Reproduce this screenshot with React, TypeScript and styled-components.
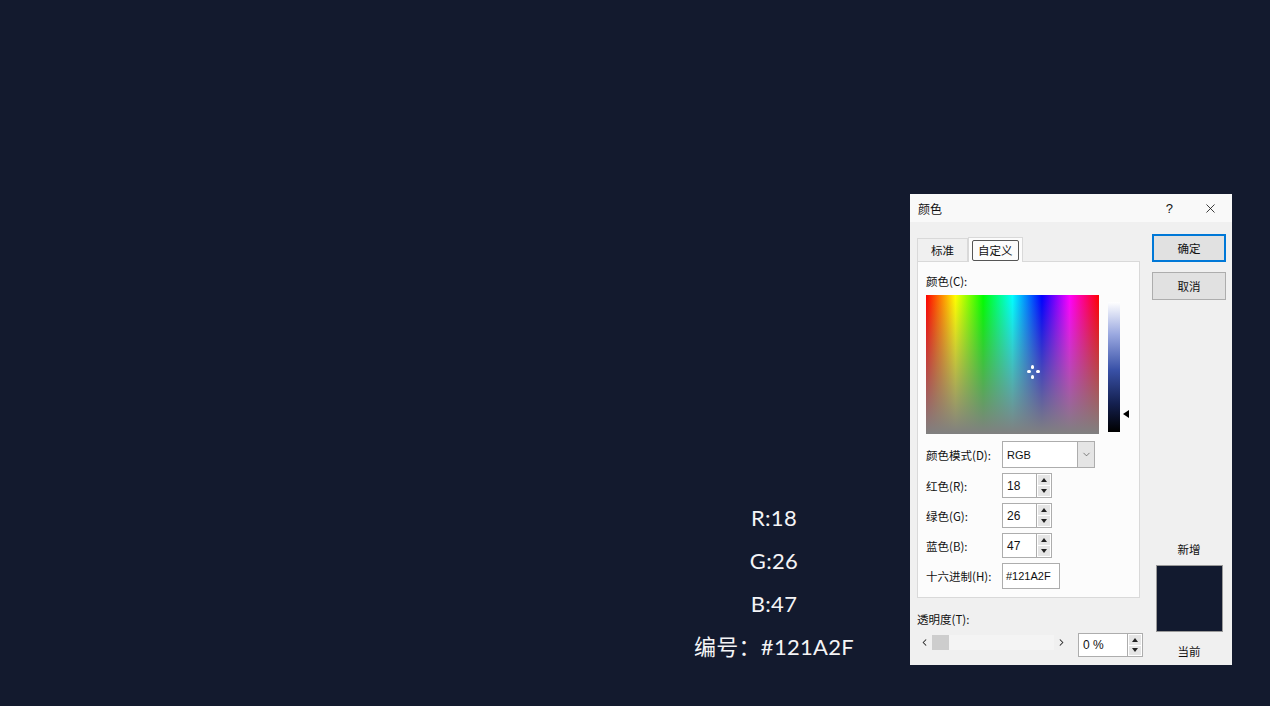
import styled, { createGlobalStyle } from "styled-components";
import { ChevronDown, ChevronLeft, ChevronRight, X } from "lucide-react";

const GlobalStyle = createGlobalStyle`
  html, body {
    margin: 0;
    padding: 0;
    background: #131a2e;
  }
`;

const CJK = `"Noto Sans CJK SC", "Noto Sans", sans-serif`;

export default function App() {
  return (
    <>
      <GlobalStyle />
      <Page>
        <Values>
          <ValueLine>R:18</ValueLine>
          <ValueLine>G:26</ValueLine>
          <ValueLine>B:47</ValueLine>
          <ValueLine>编号：#121A2F</ValueLine>
        </Values>
        <Dialog>
          <TitleBar>
            <span>颜色</span>
            <TitleActions>
              <span>?</span>
              <X size={15} strokeWidth={1.3} />
            </TitleActions>
          </TitleBar>
          <Body>
            <LeftCol>
              <Tabs>
                <Tab>标准</Tab>
                <Tab $active>
                  <FocusBox>自定义</FocusBox>
                </Tab>
              </Tabs>
              <Panel>
                <Label>颜色(C):</Label>
                <PickerRow>
                  <Spectrum>
                    <Cross>
                      <Dot style={{ left: 4, top: 0 }} />
                      <Dot style={{ left: 4, top: 10 }} />
                      <Dot style={{ left: 0, top: 5 }} $h />
                      <Dot style={{ left: 9, top: 5 }} $h />
                    </Cross>
                  </Spectrum>
                  <LumWrap>
                    <LumBar />
                    <LumArrow />
                  </LumWrap>
                </PickerRow>
                <Form>
                  <FormRow>
                    <FieldLabel>颜色模式(D):</FieldLabel>
                    <Select>
                      <SelectText>RGB</SelectText>
                      <SelectButton>
                        <ChevronDown size={11} strokeWidth={1.4} />
                      </SelectButton>
                    </Select>
                  </FormRow>
                  <FormRow>
                    <FieldLabel>红色(R):</FieldLabel>
                    <NumField value="18" />
                  </FormRow>
                  <FormRow>
                    <FieldLabel>绿色(G):</FieldLabel>
                    <NumField value="26" />
                  </FormRow>
                  <FormRow>
                    <FieldLabel>蓝色(B):</FieldLabel>
                    <NumField value="47" />
                  </FormRow>
                  <FormRow>
                    <FieldLabel>十六进制(H):</FieldLabel>
                    <HexInput>#121A2F</HexInput>
                  </FormRow>
                </Form>
              </Panel>
              <Label $pad>透明度(T):</Label>
              <SliderRow>
                <Slider>
                  <ChevronLeft size={11} strokeWidth={2.2} />
                  <Thumb />
                  <SliderTrack />
                  <ChevronRight size={11} strokeWidth={2.2} />
                </Slider>
                <Spin $h={24}>
                  <InputBox $w={50}>0 %</InputBox>
                  <SpinButtons />
                </Spin>
              </SliderRow>
            </LeftCol>
            <RightCol>
              <Button $primary>确定</Button>
              <Button>取消</Button>
              <Preview>
                <PreviewLabel>新增</PreviewLabel>
                <Swatch />
                <PreviewLabel>当前</PreviewLabel>
              </Preview>
            </RightCol>
          </Body>
        </Dialog>
      </Page>
    </>
  );
}

function NumField({ value }: { value: string }) {
  return (
    <Spin $h={25}>
      <InputBox $w={35}>{value}</InputBox>
      <SpinButtons />
    </Spin>
  );
}

function SpinButtons() {
  return (
    <SpinCol>
      <SpinBtn>
        <svg width="6" height="4" viewBox="0 0 6 4">
          <path d="M0 4 L3 0 L6 4 Z" fill="#222" />
        </svg>
      </SpinBtn>
      <SpinBtn>
        <svg width="6" height="4" viewBox="0 0 6 4">
          <path d="M0 0 L3 4 L6 0 Z" fill="#222" />
        </svg>
      </SpinBtn>
    </SpinCol>
  );
}

const Page = styled.div`
  width: 1270px;
  height: 706px;
  box-sizing: border-box;
  padding: 194px 38px 0 684px;
  display: flex;
  align-items: flex-start;
  gap: 46px;
  background: #131a2e;
  overflow: hidden;
`;

const Values = styled.div`
  width: 180px;
  margin-top: 302px;
  display: flex;
  flex-direction: column;
  align-items: center;
`;

const ValueLine = styled.div`
  height: 43px;
  line-height: 43px;
  color: #f4f4f6;
  font-family: "Lato", "Noto Sans CJK SC", sans-serif;
  font-size: 22px;
  white-space: nowrap;
  letter-spacing: 0.3px;
`;

const Dialog = styled.div`
  width: 322px;
  height: 471px;
  display: flex;
  flex-direction: column;
  background: #f0f0f0;
  font-family: ${CJK};
  font-size: 11.5px;
  color: #111;
`;

const TitleBar = styled.div`
  height: 28px;
  flex-shrink: 0;
  display: flex;
  align-items: center;
  justify-content: space-between;
  padding: 0 14px 0 8px;
  background: #f9f9f9;
  font-size: 12px;
`;

const TitleActions = styled.div`
  display: flex;
  align-items: center;
  gap: 30px;
  font-family: "Liberation Sans", sans-serif;
  font-size: 13px;
`;

const Body = styled.div`
  flex: 1;
  display: flex;
  gap: 12px;
  padding: 12px 6px 0 7px;
`;

const LeftCol = styled.div`
  width: 223px;
  display: flex;
  flex-direction: column;
`;

const Tabs = styled.div`
  margin-top: 2px;
  height: 25px;
  display: flex;
  align-items: flex-end;
`;

const Tab = styled.div<{ $active?: boolean }>`
  height: ${(p) => (p.$active ? 25 : 23)}px;
  box-sizing: border-box;
  padding: 0 ${(p) => (p.$active ? 3 : 13)}px;
  display: flex;
  align-items: center;
  justify-content: center;
  background: ${(p) => (p.$active ? "#fcfcfc" : "#f0f0f0")};
  border: 1px solid #d9d9d9;
  border-bottom: none;
  margin-bottom: ${(p) => (p.$active ? -1 : 0)}px;
  position: relative;
  z-index: ${(p) => (p.$active ? 1 : 0)};
`;

const FocusBox = styled.div`
  border: 1px solid #555;
  border-radius: 2px;
  padding: 1px 5px;
  line-height: 17px;
`;

const Panel = styled.div`
  height: 337px;
  box-sizing: border-box;
  background: #fcfcfc;
  border: 1px solid #d9d9d9;
  padding: 11px 8px 0 8px;
  display: flex;
  flex-direction: column;
`;

const Label = styled.div<{ $pad?: boolean }>`
  height: 16px;
  line-height: 16px;
  margin-top: ${(p) => (p.$pad ? 13 : 0)}px;
  margin-bottom: 5px;
`;

const PickerRow = styled.div`
  display: flex;
  margin-top: 1px;
`;

const Spectrum = styled.div`
  width: 173px;
  height: 139px;
  position: relative;
  background: linear-gradient(to bottom, rgba(128, 128, 128, 0), rgba(128, 128, 128, 1)),
    linear-gradient(
      to right,
      #ff0000 0%,
      #ffff00 17%,
      #00ff00 33%,
      #00ffff 50%,
      #0000ff 67%,
      #ff00ff 83%,
      #ff0000 100%
    );
`;

const Cross = styled.div`
  position: absolute;
  left: 101px;
  top: 70px;
  width: 12px;
  height: 13px;
`;

const Dot = styled.div<{ $h?: boolean }>`
  position: absolute;
  width: ${(p) => (p.$h ? 4 : 3)}px;
  height: ${(p) => (p.$h ? 3 : 4)}px;
  border-radius: 2px;
  background: #fff;
`;

const LumWrap = styled.div`
  margin-left: 9px;
  margin-top: 7px;
  display: flex;
  align-items: flex-start;
`;

const LumBar = styled.div`
  width: 12px;
  height: 130px;
  background: linear-gradient(to bottom, #ffffff 0%, #9aa8e0 25%, #3a52a8 52%, #142050 78%, #000 100%);
`;

const LumArrow = styled.div`
  margin-top: 108px;
  margin-left: 3px;
  width: 0;
  height: 0;
  border-top: 4px solid transparent;
  border-bottom: 4px solid transparent;
  border-right: 6px solid #000;
`;

const Form = styled.div`
  margin-top: 7px;
  display: flex;
  flex-direction: column;
  gap: 5px;
`;

const FormRow = styled.div`
  display: flex;
  align-items: center;
`;

const FieldLabel = styled.div`
  width: 76px;
  white-space: nowrap;
`;

const Select = styled.div`
  width: 93px;
  height: 27px;
  box-sizing: border-box;
  border: 1px solid #adadad;
  background: #fff;
  display: flex;
`;

const SelectText = styled.div`
  flex: 1;
  padding-left: 4px;
  display: flex;
  align-items: center;
  font-family: "Liberation Sans", sans-serif;
  font-size: 11px;
`;

const SelectButton = styled.div`
  width: 16px;
  display: flex;
  align-items: center;
  justify-content: center;
  background: #e5e5e5;
  border-left: 1px solid #adadad;
  color: #444;
`;

const Spin = styled.div<{ $h: number }>`
  display: flex;
  flex-shrink: 0;
  height: ${(p) => p.$h}px;
`;

const InputBox = styled.div<{ $w: number }>`
  width: ${(p) => p.$w}px;
  box-sizing: border-box;
  border: 1px solid #adadad;
  background: #fff;
  padding-left: 4px;
  display: flex;
  align-items: center;
  font-family: "Liberation Sans", sans-serif;
  font-size: 12px;
`;

const SpinCol = styled.div`
  width: 15px;
  display: flex;
  flex-direction: column;
  box-sizing: border-box;
  border: 1px solid #adadad;
  border-left: none;
  background: #fff;
  padding: 1px;
  gap: 1px;
`;

const SpinBtn = styled.div`
  flex: 1;
  background: #e5e5e5;
  display: flex;
  align-items: center;
  justify-content: center;
`;

const HexInput = styled.div`
  width: 58px;
  height: 26px;
  box-sizing: border-box;
  border: 1px solid #adadad;
  background: #fff;
  padding-left: 3px;
  display: flex;
  align-items: center;
  font-family: "Liberation Sans", sans-serif;
  font-size: 11px;
`;

const SliderRow = styled.div`
  display: flex;
  align-items: flex-start;
  gap: 11px;
  margin-top: 1px;
`;

const Slider = styled.div`
  width: 148px;
  flex-shrink: 0;
  height: 18px;
  display: flex;
  align-items: center;
  padding-left: 2px;
  color: #222;
`;

const Thumb = styled.div`
  width: 17px;
  height: 15px;
  background: #cdcdcd;
  margin-left: 2px;
`;

const SliderTrack = styled.div`
  flex: 1;
  height: 15px;
  background: #f4f4f4;
  margin-right: 2px;
`;

const RightCol = styled.div`
  width: 74px;
  display: flex;
  flex-direction: column;
  gap: 10px;
`;

const Button = styled.div<{ $primary?: boolean }>`
  height: 28px;
  box-sizing: border-box;
  border: ${(p) => (p.$primary ? "2px solid #0078d7" : "1px solid #adadad")};
  background: #e1e1e1;
  display: flex;
  align-items: center;
  justify-content: center;
`;

const Preview = styled.div`
  margin-top: auto;
  padding-bottom: 6px;
  display: flex;
  flex-direction: column;
  align-items: center;
`;

const PreviewLabel = styled.div`
  line-height: 16px;
`;

const Swatch = styled.div`
  width: 67px;
  height: 67px;
  background: #121a2f;
  border: 1px solid #9a9a9a;
  box-sizing: border-box;
  margin: 8px 0 11px;
`;
